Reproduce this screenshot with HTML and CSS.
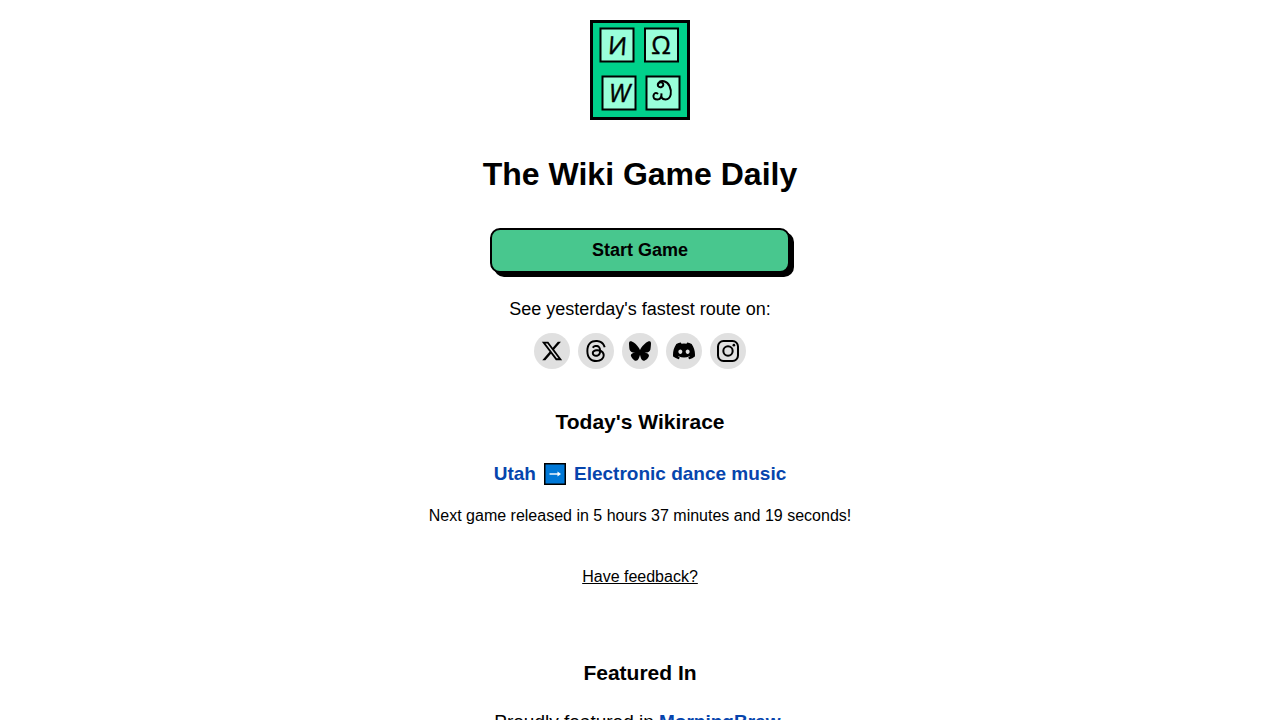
FILE: index.html
```html
<!DOCTYPE html>
<html lang="en">
<head>
    <meta charset="UTF-8">
    <meta name="viewport" content="width=device-width, initial-scale=1.0">
    <title>The Wiki Game Daily</title>
    <link rel="stylesheet" href="styles.css">
</head>
<body>
    <main class="container">
        <svg class="logo" viewBox="0 0 100 100" role="img" aria-label="The Wiki Game logo">
            <rect class="logo-frame" x="1.5" y="1.5" width="97" height="97"/>
            <g class="logo-tile">
                <rect x="10.5" y="8.5" width="33" height="33"/>
                <rect x="55" y="8.5" width="33" height="33"/>
                <rect x="12.5" y="56.5" width="33" height="33"/>
                <rect x="56.500" y="56.5" width="33" height="33"/>
            </g>
            <g class="logo-letter">
                <text rotate="4" x="27" y="34">И</text>
                <text x="71" y="34">Ω</text>
                <text class="slanted" x="29.5" y="82">W</text>
            </g>
            <path class="logo-swirl" d="M68 66C70 68.500 74.500 66.500 73 63.500C71.500 61 67 62.500 68 66M68.500 63C71 59.500 77 61 79.500 66C82 71.500 81.500 79 75.500 79.500C71.500 79.500 71 77 71.500 73.500C71.500 77 70.500 79.500 67.500 79.500C64.500 79.500 63 78 63.500 75.500C64 73 66 72.500 67.500 73.500"/>
        </svg>

        <h1>The Wiki Game Daily</h1>

        <button type="button" class="start-button">Start Game</button>

        <p class="route-text">See yesterday's fastest route on:</p>
        <div class="socials">
            <a href="#" aria-label="X">
                <svg viewBox="-1 -1 26 26"><path d="M18.901 1.153h3.68l-8.04 9.19L24 22.846h-7.406l-5.8-7.584-6.638 7.584H.474l8.6-9.83L0 1.154h7.594l5.243 6.932ZM17.61 20.644h2.039L6.486 3.24H4.298Z"/></svg>
            </a>
            <a href="#" aria-label="Threads">
                <svg viewBox="0 0 16 16"><path d="M6.321 6.016c-.27-.18-1.166-.802-1.166-.802.756-1.081 1.753-1.502 3.132-1.502.975 0 1.803.327 2.394.948s.928 1.509 1.005 2.644q.492.207.905.484c1.109.745 1.719 1.86 1.719 3.137 0 2.716-2.226 5.075-6.256 5.075C4.594 16 1 13.987 1 7.994 1 2.034 4.482 0 8.044 0 9.69 0 13.55.243 15 5.036l-1.36.353C12.516 1.974 10.163 1.43 8.006 1.43c-3.565 0-5.582 2.171-5.582 6.79 0 4.143 2.254 6.343 5.63 6.343 2.777 0 4.847-1.443 4.847-3.556 0-1.438-1.208-2.127-1.27-2.127-.236 1.234-.868 3.31-3.644 3.31-1.618 0-3.013-1.118-3.013-2.582 0-2.09 1.984-2.847 3.55-2.847.586 0 1.294.04 1.663.114 0-.637-.54-1.728-1.9-1.728-1.25 0-1.566.405-1.967.868ZM8.716 8.19c-2.04 0-2.304.87-2.304 1.416 0 .878 1.043 1.168 1.6 1.168 1.02 0 2.067-.282 2.232-2.423a6.2 6.2 0 0 0-1.528-.161"/></svg>
            </a>
            <a href="#" aria-label="Bluesky">
                <svg viewBox="0 0 24 24"><path d="M12 10.8c-1.087-2.114-4.046-6.053-6.798-7.995C2.566.944 1.561 1.266.902 1.565.139 1.908 0 3.08 0 3.768c0 .69.378 5.65.624 6.479.815 2.736 3.713 3.66 6.383 3.364-3.912.58-7.387 2.005-2.83 7.078 5.013 5.19 6.87-1.113 7.823-4.308.953 3.195 2.05 9.271 7.733 4.308 4.267-4.308 1.172-6.498-2.74-7.078 2.67.297 5.568-.628 6.383-3.364.246-.828.624-5.79.624-6.478 0-.69-.139-1.861-.902-2.206-.659-.298-1.664-.62-4.3 1.24C16.046 4.748 13.087 8.687 12 10.8Z"/></svg>
            </a>
            <a href="#" aria-label="Discord">
                <svg viewBox="0 0 16 16"><path d="M13.545 2.907a13.2 13.2 0 0 0-3.257-1.011.05.05 0 0 0-.052.025c-.141.25-.297.577-.406.833a12.2 12.2 0 0 0-3.658 0 8 8 0 0 0-.412-.833.05.05 0 0 0-.052-.025c-1.125.194-2.22.534-3.257 1.011a.04.04 0 0 0-.021.018C.356 6.024-.213 9.047.066 12.032q.003.022.021.037a13.3 13.3 0 0 0 3.995 2.02.05.05 0 0 0 .056-.019q.463-.63.818-1.329a.05.05 0 0 0-.01-.059l-.018-.011a9 9 0 0 1-1.248-.595.05.05 0 0 1-.02-.066l.015-.019q.127-.095.248-.195a.05.05 0 0 1 .051-.007c2.619 1.196 5.454 1.196 8.041 0a.05.05 0 0 1 .053.007q.121.1.248.195a.05.05 0 0 1-.004.085 8 8 0 0 1-1.249.594.05.05 0 0 0-.03.03.05.05 0 0 0 .003.041c.24.465.515.909.817 1.329a.05.05 0 0 0 .056.019 13.2 13.2 0 0 0 4.001-2.02.05.05 0 0 0 .021-.037c.334-3.451-.559-6.449-2.366-9.106a.03.03 0 0 0-.02-.019m-8.198 7.307c-.789 0-1.438-.724-1.438-1.612s.637-1.613 1.438-1.613c.807 0 1.45.73 1.438 1.613 0 .888-.637 1.612-1.438 1.612m5.316 0c-.788 0-1.438-.724-1.438-1.612s.637-1.613 1.438-1.613c.807 0 1.451.73 1.438 1.613 0 .888-.631 1.612-1.438 1.612"/></svg>
            </a>
            <a href="#" aria-label="Instagram">
                <svg viewBox="0 0 24 24">
                    <rect class="line" x="1.1" y="1.1" width="21.8" height="21.8" rx="6"/>
                    <circle class="line" cx="12" cy="12" r="5.1"/>
                    <circle cx="18.4" cy="5.6" r="1.45"/>
                </svg>
            </a>
        </div>

        <section class="wikirace">
            <h2>Today's Wikirace</h2>
            <p class="race">
                <a href="#">Utah</a>
                <svg class="arrow" viewBox="0 0 22 22" role="img" aria-label="to">
                    <rect x="0.75" y="0.75" width="20.5" height="20.5"/>
                    <path class="shaft" d="M5.5 11H15"/>
                    <path class="head" d="M13.5 8.5L17 11L13.5 13.5Z"/>
                </svg>
                <a href="#">Electronic dance music</a>
            </p>
            <p class="countdown">Next game released in 5 hours 37 minutes and 19 seconds!</p>
        </section>

        <a class="feedback" href="#">Have feedback?</a>

        <section class="featured">
            <h2>Featured In</h2>
            <p>Proudly featured in <a href="#">MorningBrew</a>.</p>
        </section>
    </main>
</body>
</html>
```
FILE: styles.css
```css
:root {
    --text-color: #000000;
    --link-color: #0645ad;
    --button-color: #48c78e;
    --icon-bg: #e0e0e0;
}

body {
    margin: 0;
    font-family: Arial, "Liberation Sans", sans-serif;
    font-size: 16px;
    line-height: 24px;
    background-color: white;
    color: var(--text-color);
}

.container {
    display: flex;
    flex-direction: column;
    align-items: center;
    padding: 20px;
    text-align: center;
}

.logo {
    width: 100px;
    height: 100px;
}

.logo-frame {
    fill: #00d18b;
    stroke: black;
    stroke-width: 3;
}

.logo-tile rect {
    fill: #99ffda;
    stroke: black;
    stroke-width: 2;
}

.logo-letter {
    font-family: "Open Sans", sans-serif;
    font-size: 25px;
    text-anchor: middle;
    stroke: black;
    stroke-width: 0.4;
}

.slanted {
    font-style: italic;
}

.logo-swirl {
    fill: none;
    stroke: black;
    stroke-width: 2;
    stroke-linecap: round;
}

h1 {
    margin: 34px 0;
    font-size: 32px;
    line-height: 40px;
}

h2 {
    margin: 0;
    font-size: 21px;
    line-height: 24px;
}

p {
    margin: 0;
}

.start-button {
    width: 100%;
    max-width: 300px;
    padding: 10px;
    border: 2px solid black;
    border-radius: 10px;
    background-color: var(--button-color);
    box-shadow: 4px 4px 0 black;
    color: black;
    font-family: inherit;
    font-size: 18px;
    font-weight: bold;
    line-height: 21px;
    cursor: pointer;
}

.route-text {
    margin-top: 24px;
    font-size: 18px;
}

.socials {
    display: flex;
    gap: 8px;
    margin-top: 12px;
}

.socials a {
    display: flex;
    align-items: center;
    justify-content: center;
    width: 36px;
    height: 36px;
    border-radius: 50%;
    background-color: var(--icon-bg);
}

.socials svg {
    width: 22px;
    height: 22px;
}

.line {
    fill: none;
    stroke: black;
    stroke-width: 2.2;
}

.wikirace {
    margin-top: 41px;
}

.race {
    display: flex;
    flex-wrap: wrap;
    align-items: center;
    justify-content: center;
    gap: 8px;
    margin-top: 28px;
    font-size: 19px;
}

.race a,
.featured a {
    color: var(--link-color);
    font-weight: bold;
    text-decoration: none;
}

.arrow {
    width: 22px;
    height: 22px;
}

.arrow rect {
    fill: #0078d7;
    stroke: black;
    stroke-width: 1.5;
}

.shaft {
    fill: none;
    stroke: white;
    stroke-width: 1.4;
}

.head {
    fill: white;
}

.countdown {
    margin-top: 18px;
}

.feedback {
    margin-top: 37px;
    color: inherit;
}

.featured {
    margin-top: 72px;
}

.featured p {
    margin-top: 25px;
    font-size: 19px;
}
```
